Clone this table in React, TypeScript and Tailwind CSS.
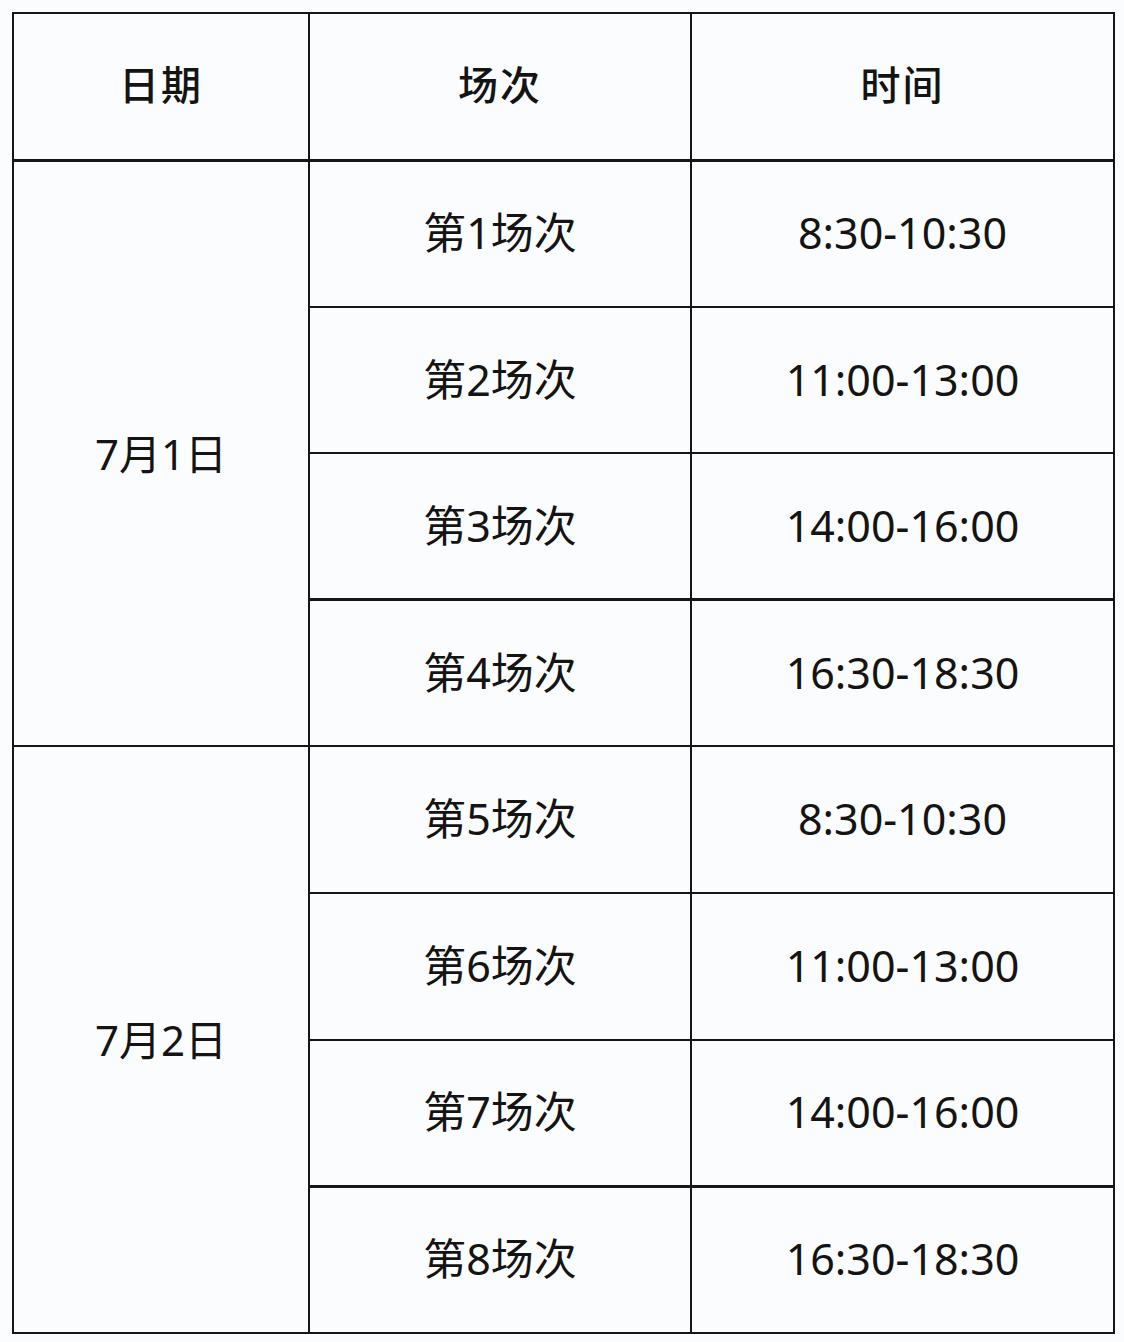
const days = [
  {
    date: "7月1日",
    sessions: [
      { name: "第1场次", time: "8:30-10:30" },
      { name: "第2场次", time: "11:00-13:00" },
      { name: "第3场次", time: "14:00-16:00" },
      { name: "第4场次", time: "16:30-18:30" },
    ],
  },
  {
    date: "7月2日",
    sessions: [
      { name: "第5场次", time: "8:30-10:30" },
      { name: "第6场次", time: "11:00-13:00" },
      { name: "第7场次", time: "14:00-16:00" },
      { name: "第8场次", time: "16:30-18:30" },
    ],
  },
]

const cell = "border-2 border-[#161616] text-center align-middle"

export default function App() {
  return (
    <div className="min-h-screen bg-[#fbfcfd] pt-[12px] pl-[12px] font-['Noto_Sans','Noto_Sans_CJK_SC',sans-serif] text-[#141414]">
      <table className="w-[1101px] table-fixed border-collapse">
        <colgroup>
          <col className="w-[296px]" />
          <col className="w-[382px]" />
          <col className="w-[423px]" />
        </colgroup>
        <thead>
          <tr className="h-[147px]">
            {["日期", "场次", "时间"].map((h) => (
              <th
                key={h}
                className={`${cell} border-b-[3px] pb-[6px] text-[40px] font-medium tracking-[2px] font-['Noto_Sans_CJK_SC',serif]`}
              >
                {h}
              </th>
            ))}
          </tr>
        </thead>
        <tbody>
          {days.map((d) =>
            d.sessions.map((s, i) => (
              <tr key={s.name} className="h-[146.6px]">
                {i === 0 && (
                  <td rowSpan={4} className={`${cell} text-[42px]`}>
                    {d.date}
                  </td>
                )}
                <td className={`${cell} text-[43px] ${i === 2 ? "border-b-[3px]" : ""}`}>{s.name}</td>
                <td className={`${cell} text-[43px] ${i === 2 ? "border-b-[3px]" : ""}`}>{s.time}</td>
              </tr>
            ))
          )}
        </tbody>
      </table>
    </div>
  )
}
